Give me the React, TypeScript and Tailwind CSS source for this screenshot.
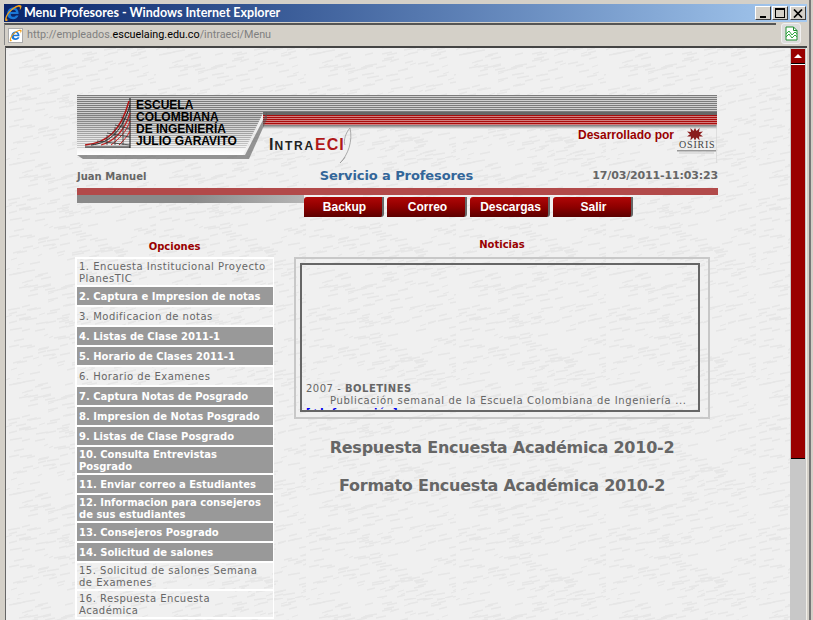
import React from "react";

const strokes: string[] = [];
let seed = 11;
const rnd = () => {
  seed = (seed * 16807) % 2147483647;
  return seed / 2147483647;
};
for (let i = 0; i < 220; i++) {
  const x = Math.round(rnd() * 150);
  const y = Math.round(rnd() * 110);
  const l = 4 + Math.round(rnd() * 8);
  strokes.push(`M${x} ${y}l${Math.round(l / 2)} -1l${Math.round(l / 2)} -1`);
}

function Texture() {
  return (
    <svg className="absolute inset-0 w-full h-full" aria-hidden="true">
      <defs>
        <pattern id="tx" width="150" height="110" patternUnits="userSpaceOnUse">
          {strokes.map((d, i) => (
            <path key={i} d={d} stroke="#e6e6e6" strokeWidth="1.300" fill="none" />
          ))}
        </pattern>
      </defs>
      <rect width="100%" height="100%" fill="url(#tx)" />
    </svg>
  );
}

function IEIcon({ size = 16 }: { size?: number }) {
  return (
    <svg width={size} height={size} viewBox="0 0 16 16" className="shrink-0">
      <path d="M2.800 9.200C2.800 5.400 5.200 3.200 8.200 3.200c3 0 4.800 2.200 4.800 5.600H6c0 1.700.9 2.600 2.400 2.600 1 0 1.800-.4 2.200-1.200h2.300c-.8 2.100-2.600 3.300-4.800 3.300-3.200 0-5.300-1.900-5.300-4.300zM6 7h4.600C10.500 5.800 9.500 5 8.300 5S6.200 5.800 6 7z" fill="#1a78d8" />
      <path d="M1.300 15C-.1 13 3.200 6.100 9.200 2.600c3-1.800 5.500-2.200 6.200-1.100.5.900-.2 2.500-1.400 4 .2-1.300.3-2.400-.2-2.800-.9-.7-3.100.2-5.400 1.900C4.400 7.200 2 11.400 2.500 13.300c.1.600.7.800 1.400.7-1 .9-2 1.400-2.600 1z" fill="#f2a01a" />
    </svg>
  );
}

function WinBtn({ children }: { children: React.ReactNode }) {
  return (
    <div className="w-[16px] h-[14px] bg-[#d4d0c8] border-t border-l border-t-white border-l-white border-r border-b border-r-[#404040] border-b-[#404040] flex items-center justify-center">
      {children}
    </div>
  );
}

function NavBtn({ label }: { label: string }) {
  return (
    <div className="w-[80px] h-[20px] pl-[3px] rounded-tl-[3px] rounded-br-[3px] flex items-center justify-center text-white font-bold text-[12px] bg-gradient-to-b from-[#b00808] via-[#8e0000] to-[#5c0000] border-r-2 border-r-[#666] font-['Liberation_Sans',sans-serif]">
      {label}
    </div>
  );
}

const items: [string, boolean][] = [
  ["1. Encuesta Institucional Proyecto PlanesTIC", false],
  ["2. Captura e Impresion de notas", true],
  ["3. Modificacion de notas", false],
  ["4. Listas de Clase 2011-1", true],
  ["5. Horario de Clases 2011-1", true],
  ["6. Horario de Examenes", false],
  ["7. Captura Notas de Posgrado", true],
  ["8. Impresion de Notas Posgrado", true],
  ["9. Listas de Clase Posgrado", true],
  ["10. Consulta Entrevistas Posgrado", true],
  ["11. Enviar correo a Estudiantes", true],
  ["12. Informacion para consejeros de sus estudiantes", true],
  ["13. Consejeros Posgrado", true],
  ["14. Solicitud de salones", true],
  ["15. Solicitud de salones Semana de Examenes", false],
  ["16. Respuesta Encuesta Académica", false],
];

function Banner() {
  const grayLines = [];
  for (let y = 0; y < 18; y += 2) grayLines.push(y);
  const panelLines = [];
  for (let y = 18; y < 53; y += 2) panelLines.push(y);
  return (
    <div className="relative w-[640px] h-[70px]">
      <svg width="640" height="70" className="absolute inset-0" aria-hidden="true">
        <defs>
          <linearGradient id="fade" x1="0" y1="0" x2="0" y2="1">
            <stop offset="0" stopColor="#bdbdbd" />
            <stop offset="1" stopColor="#ffffff" />
          </linearGradient>
          <linearGradient id="redfade" x1="0" y1="0" x2="0" y2="1">
            <stop offset="0" stopColor="#777777" />
            <stop offset="1" stopColor="#f0f0f0" />
          </linearGradient>
        </defs>
        <rect x="0" y="0" width="640" height="18" fill="#d0d0d0" />
        {grayLines.map((y) => (
          <rect key={y} x="0" y={y} width="640" height="1" fill="#7c7c7c" />
        ))}
        <rect x="186" y="17" width="454" height="3" fill="#666" />
        <rect x="186" y="20" width="454" height="10" fill="#dc9a9a" />
        {[20, 22, 24, 26, 28].map((y) => (
          <rect key={y} x="186" y={y} width="454" height="1.200" fill="#a80c0c" />
        ))}
        <rect x="186" y="30" width="454" height="4" fill="url(#redfade)" />
        <path d="M168 60L190 17V24L172 64H6L0 60z" fill="#555" opacity=".6" />
        <path d="M0 18H186L166 60H0z" fill="url(#fade)" />
        <clipPath id="pc">
          <path d="M0 18H186L168 54H0z" />
        </clipPath>
        <g clipPath="url(#pc)">
          {panelLines.map((y) => (
            <rect key={y} x="0" y={y} width="200" height="1" fill="#7c7c7c" opacity={1 - (y - 18) / 50} />
          ))}
        </g>
        {/* logo */}
        <g fill="none">
          <path d="M53 3V53" stroke="#111" strokeWidth="1" />
          <path d="M8 52H53" stroke="#111" strokeWidth="1" />
          <path d="M8 50C30 48 44 36 52 6" stroke="#b01818" strokeWidth="1.500" />
          <path d="M14 50C34 48 46 34 53 10" stroke="#222" strokeWidth="1" />
          <path d="M24 50C38 46 48 34 53 18" stroke="#c02020" strokeWidth="1.200" />
          <path d="M34 50C42 44 50 36 53 26M42 50C46 46 50 42 53 36" stroke="#d02020" strokeWidth="1" />
          <path d="M20 46L53 50M30 38L53 42M38 30L53 34M44 22L53 26" stroke="#333" strokeWidth=".8" />
          <path d="M30 50V40M38 50V32M46 50V24" stroke="#333" strokeWidth=".8" />
        </g>
        {/* swoosh */}
        <path d="M273 33C269 37 266 46 268 50M273 33C276 46 271 60 263 68C265 66 268 63 268 62" stroke="#999" strokeWidth=".8" fill="none" />
        <path d="M640 30V68" stroke="#ccc" strokeWidth="1" />
        {/* osiris */}
        <path transform="translate(6 0)" d="M612 33l1.600 3 3-3-.6 4 4-.4-3 2.600 3 2.400-4-.2.600 4-3-3-1.600 3-1.600-3-3 3 .6-4-4 .2 3-2.400-3-2.600 4 .4-.6-4 3 3z" fill="#8a1c1c" />
        <rect x="600" y="55" width="39" height="1.500" fill="#999" />
        <rect x="602" y="57.500" width="35" height="1" fill="#ccc" />
      </svg>
      <div className="absolute left-[59px] top-[4px] text-[12px] leading-[12px] font-bold text-black font-['Liberation_Sans',sans-serif] whitespace-nowrap">
        <div>ESCUELA</div>
        <div>COLOMBIANA</div>
        <div>DE INGENIERÍA</div>
        <div>JULIO GARAVITO</div>
      </div>
      <div className="absolute left-[192px] top-[41px] font-bold leading-[18px] whitespace-nowrap font-['Liberation_Sans',sans-serif]">
        <span className="text-[#222] text-[16px] tracking-[1px]">I</span>
        <span className="text-[#222] text-[12px] tracking-[1.800px]">NTRA</span>
        <span className="text-[#b01818] text-[16px] tracking-[1px]">ECI</span>
      </div>
      <div className="absolute left-[501px] top-[33px] text-[12px] leading-[14px] font-bold text-[#990000] whitespace-nowrap font-['Liberation_Sans',sans-serif]">
        Desarrollado por
      </div>
      <div className="absolute left-[602px] top-[44px] text-[10px] leading-[11px] text-[#444] tracking-[0.8px] whitespace-nowrap font-['Liberation_Serif',serif]">
        OSIRIS
      </div>
    </div>
  );
}

export default function App() {
  return (
    <div className="w-[813px] h-[620px] overflow-hidden bg-[#d4d0c8] flex">
      <div className="w-[808px] h-full flex flex-col pt-[4px] pl-[4px] pr-[1px]">
        {/* title bar */}
        <div className="h-[18px] shrink-0 flex items-center bg-gradient-to-r from-[#0a246a] to-[#a6caf0] pr-[1px]">
          <IEIcon size={18} />
          <span className="ml-[2px] text-white font-bold text-[12.500px] leading-[18px] font-['Lato',sans-serif] whitespace-nowrap">
            Menu Profesores - Windows Internet Explorer
          </span>
          <div className="ml-auto flex gap-[1px] items-center">
            <WinBtn>
              <div className="w-[6px] h-[2px] bg-black mt-[7px]" />
            </WinBtn>
            <WinBtn>
              <div className="w-[10px] h-[10px] border border-black border-t-2" />
            </WinBtn>
            <div className="ml-[1px]">
              <WinBtn>
                <svg width="10" height="9" viewBox="0 0 10 9">
                  <path d="M1 0.500L9 8.500M9 0.500L1 8.500" stroke="#000" strokeWidth="1.700" />
                </svg>
              </WinBtn>
            </div>
          </div>
        </div>
        {/* address bar */}
        <div className="h-[22px] shrink-0 mt-[1px] flex">
          <div className="w-[772px] border-t-2 border-t-[#555] border-l border-l-[#888] flex items-center pl-[3px]">
            <div className="w-[15px] h-[15px] bg-white border border-[#aaa] flex items-center justify-center">
              <IEIcon size={13} />
            </div>
            <span className="ml-[4px] text-[10.800px] leading-[16px] text-[#808080] whitespace-nowrap font-['Roboto',sans-serif]">
              http://empleados.<span className="text-black">escuelaing.edu.co</span>/intraeci/Menu
            </span>
          </div>
          <div className="ml-[5px] w-[20px] h-[21px] bg-[#dcdcdc] border border-[#f0f0f0] rounded-[3px] flex items-center justify-center">
            <svg width="13" height="15" viewBox="0 0 13 15" fill="none">
              <path d="M1 14V1H8.500L12 4.500V14Z" fill="#fff" stroke="#1f8f2f" />
              <path d="M8.500 1V4.500H12" stroke="#1f8f2f" />
              <path d="M1 8L4 5L7 9L10 6L12 8M1 11L4 8L7 12L10 9L12 11" stroke="#2ea83f" strokeWidth="1" />
            </svg>
          </div>
        </div>
        {/* viewport */}
        <div className="flex-1 min-h-0 flex mt-[1px] ml-[1px] border-t-2 border-t-[#444] border-l border-l-[#666]">
          <div className="relative flex-1 min-w-0 bg-[#f0f0f0] overflow-hidden">
            <Texture />
            <div className="relative pl-[71px] pt-[47px] w-[712px]">
              <Banner />
              <div className="h-[23px] pb-[1px] flex items-center justify-between font-['DejaVu_Sans',sans-serif] font-bold">
                <span className="w-[200px] text-[10px] text-[#666]">Juan Manuel</span>
                <span className="text-[13px] text-[#336699] tracking-[-0.1px] -ml-[2px]">Servicio a Profesores</span>
                <span className="w-[200px] text-right text-[11px] tracking-[-0.15px] text-[#666]">17/03/2011-11:03:23</span>
              </div>
              <div className="h-[7px] bg-[#b24a4a]" />
              <div className="flex h-[22px]">
                <div className="w-[227px] h-[8px] bg-gradient-to-r from-[#8a8a8a] via-[#8a8a8a] to-[#b5b5b5]" />
                <div className="flex gap-[3px] mt-[2px]">
                  <NavBtn label="Backup" />
                  <NavBtn label="Correo" />
                  <NavBtn label="Descargas" />
                  <NavBtn label="Salir" />
                </div>
              </div>
              <div className="flex -ml-[2px] mt-[4px] font-['DejaVu_Sans',sans-serif]">
                <div className="w-[199px] shrink-0">
                  <div className="h-[36px] pt-[20px] text-center text-[10px] leading-[12px] font-bold text-[#990000]">Opciones</div>
                  <div className="flex flex-col">
                    {items.map(([t, b]) => (
                      <div
                        key={t}
                        className={
                          b
                            ? "min-h-[20px] border-t-2 border-t-white border-l-2 border-l-white border-r border-r-white pt-[2px] px-[2px] flex items-center bg-[#999999] text-white font-bold text-[10px] leading-[12px]"
                            : "relative min-h-[20px] border-t-2 border-t-white border-l-2 border-l-white border-r border-r-white pt-[2px] px-[2px] flex items-center text-[#666666] text-[10px] leading-[12px] tracking-[0.5px]"
                        }
                      >
                        <span>{t}</span>
                      </div>
                    ))}
                    <div className="h-[2px] border-t-2 border-t-white" />
                  </div>
                </div>
                <div className="w-[416px] ml-[20px] shrink-0">
                  <div className="h-[36px] pt-[18px] text-center text-[10px] leading-[12px] font-bold text-[#990000]">Noticias</div>
                  <div className="h-[162px] border-2 border-[#c8c8c8] pt-[4px] pl-[4px] pr-[8px]">
                    <div className="h-[149px] border-2 border-[#666] overflow-hidden flex flex-col justify-end px-[4px]">
                      <div className="text-[10px] leading-[12px] text-[#666] tracking-[0.5px] whitespace-nowrap translate-y-[9px]">
                        <div>2007 - <b>BOLETINES</b></div>
                        <div className="pl-[24px] tracking-[0.66px]">Publicación semanal de la Escuela Colombiana de Ingeniería ...</div>
                        <div className="text-[#0000ee] font-bold">[+Información]</div>
                      </div>
                    </div>
                  </div>
                  <div className="mt-[19px] text-center text-[16px] leading-[20px] tracking-[-0.23px] font-bold text-[#666]">Respuesta Encuesta Académica 2010-2</div>
                  <div className="mt-[18px] text-center text-[16px] leading-[20px] tracking-[-0.23px] font-bold text-[#666]">Formato Encuesta Académica 2010-2</div>
                </div>
              </div>
            </div>
          </div>
          {/* scrollbar */}
          <div className="w-[16px] shrink-0 bg-[#c8c8c8] flex flex-col px-[1px] pt-[1px]">
            <div className="h-[15px] bg-[#990000] flex items-center justify-center border-b border-b-black">
              <svg width="8" height="4" viewBox="0 0 8 4"><path d="M4 0L8 4H0z" fill="#fff" /></svg>
            </div>
            <div className="h-[1px] bg-white" />
            <div className="h-[394px] bg-[#990000] border-b border-b-black" />
          </div>
          <div className="w-[1px] shrink-0 bg-[#f0eee8]" />
        </div>
      </div>
      <div className="w-[1px] h-full bg-[#d4d0c8]" />
      <div className="w-[2px] h-full bg-[#777]" />
    </div>
  );
}
